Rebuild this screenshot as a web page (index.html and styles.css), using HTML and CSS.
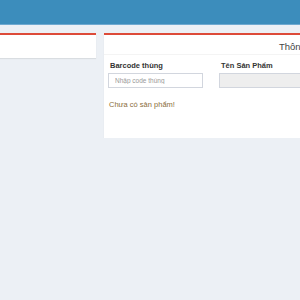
FILE: index.html
```html
<!DOCTYPE html>
<html lang="vi">
<head>
    <meta charset="UTF-8">
    <meta name="viewport" content="width=device-width, initial-scale=1.0">
    <title>Thông tin thùng</title>
    <link rel="stylesheet" href="styles.css">
</head>
<body>
    <div class="topBar"></div>

    <div class="pageContent">
        <div class="box sideBox"></div>

        <div class="box mainBox">
            <div class="boxHeader">
                <h3 class="boxTitle">Thông tin thùng</h3>
            </div>
            <div class="boxBody">
                <div class="formRow">
                    <div class="formGroup barcodeGroup">
                        <label for="barcodeInput">Barcode thùng</label>
                        <input type="text" id="barcodeInput" placeholder="Nhập code thùng">
                    </div>
                    <div class="formGroup nameGroup">
                        <label for="nameInput">Tên Sản Phẩm</label>
                        <input type="text" id="nameInput" disabled>
                    </div>
                </div>
                <p class="emptyText">Chưa có sản phẩm!</p>
            </div>
        </div>
    </div>
</body>
</html>
```

FILE: styles.css
```css
body {
    margin: 0;
    background: #ecf0f5;
    font-family: "Liberation Sans", Arial, sans-serif;
    color: #333;
    overflow: hidden;
}
.topBar {
    height: 24px;
    background: #3c8dbc;
    border-bottom: 1px solid #6fa9d0;
}
.pageContent {
    display: flex;
    align-items: flex-start;
    gap: 8px;
    width: 560px;
    padding-top: 8px;
}
.box {
    background: #fff;
    border-top: 2px solid #dd4b39;
    box-shadow: 0 1px 1px rgba(0,0,0,0.08);
}
.sideBox {
    width: 96px;
    height: 23px;
}
.mainBox {
    flex: 1;
}
.boxHeader {
    padding: 5px 8px;
    border-bottom: 1px solid #f4f4f4;
    height: 9px;
}
.boxTitle {
    margin: 0;
    padding-left: 167px;
    font-size: 9.5px;
    font-weight: normal;
    line-height: 14px;
    color: #444;
}
.boxBody {
    padding: 6px 0 29px 4px;
}
.formRow {
    display: flex;
    gap: 16px;
}
.formGroup label {
    display: block;
    font-size: 7.5px;
    line-height: 9px;
    font-weight: bold;
    margin: 0 0 3px 2px;
    color: #333;
}
.barcodeGroup input {
    width: 95px;
}
.nameGroup input {
    width: 200px;
    background: #eee;
}
.formGroup input {
    display: block;
    box-sizing: border-box;
    height: 15px;
    margin: 0;
    padding: 0 6px;
    border: 1px solid #d2d6de;
    font-family: inherit;
    font-size: 6.5px;
    outline: none;
}
.formGroup input::placeholder {
    color: #999;
}
.emptyText {
    margin: 12px 0 0 1px;
    font-size: 7.5px;
    line-height: 9px;
    color: #8a6d3b;
}
```
